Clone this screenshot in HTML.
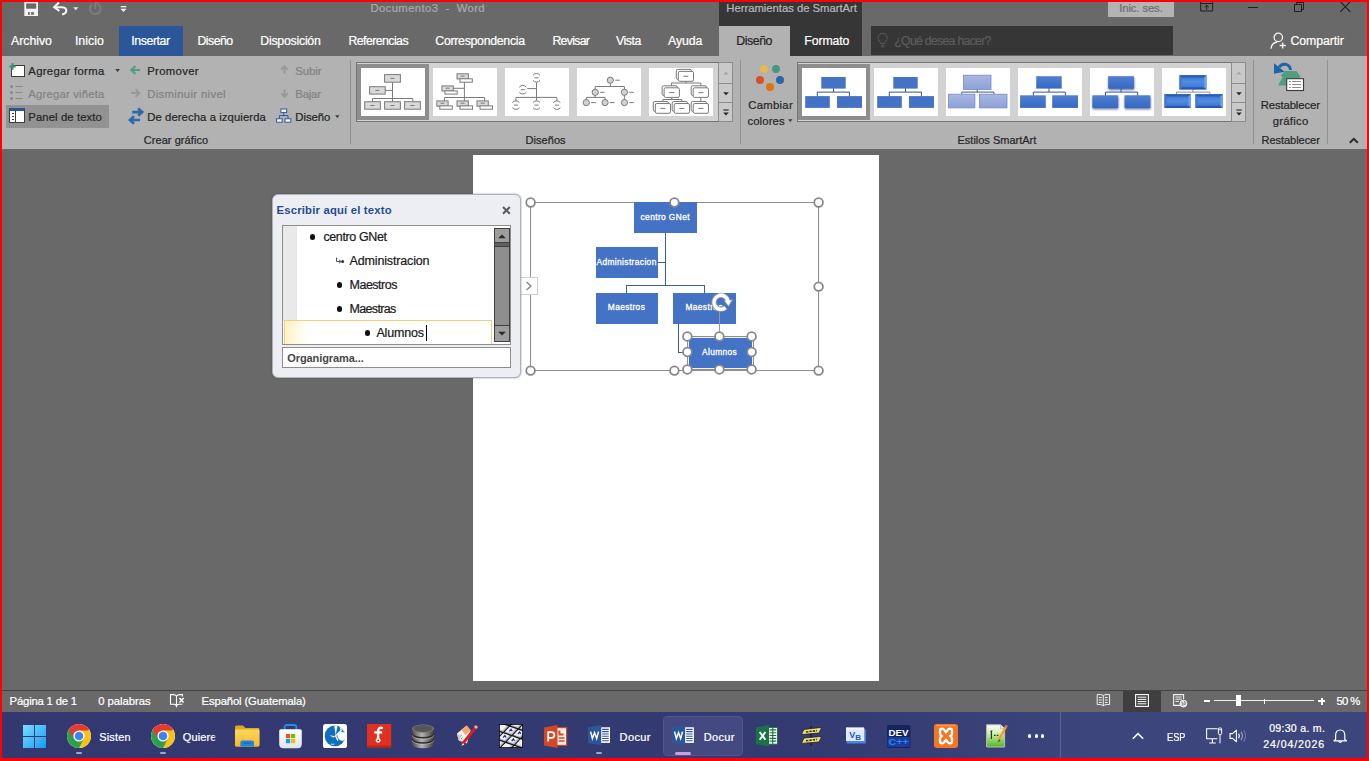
<!DOCTYPE html>
<html><head><meta charset="utf-8">
<style>
*{box-sizing:border-box;margin:0;padding:0}
html,body{width:1369px;height:761px;overflow:hidden;background:#696969}
body{font-family:"Liberation Sans",sans-serif;font-size:12px;color:#fff;position:relative}
.a{position:absolute}
svg{position:absolute;overflow:visible}
.t{position:absolute;white-space:nowrap;line-height:16px;z-index:20;-webkit-text-stroke:0.22px currentColor}
.red{position:absolute;background:#fe0000;z-index:100}
.gal{position:absolute;top:62px;height:60px;background:#d2d2d2;border:1px solid #757575}
.gi{position:absolute;top:68px;width:64px;height:48px;background:#fff}
.gsel{position:absolute;top:64px;width:72px;height:56px;background:#8d8d8d}
.sb{position:absolute;width:15px;background:#c9c9c9;border:1px solid #8c8c8c}
.sep{position:absolute;top:60px;width:1px;height:84px;background:#919191}
.box{position:absolute;background:#4472c4}
.h{position:absolute;width:10.4px;height:10.4px;border-radius:50%;background:#fff;border:1.7px solid #878787;z-index:25}
.ln{position:absolute;background:#3c5f9f}
</style></head><body>
<!-- ================= TITLE BAR ================= -->
<div class="a" style="left:719px;top:0;width:143px;height:56px;background:#363636"></div>
<div class="a" style="left:1108px;top:0;width:66px;height:17px;background:#b3b3b3"></div>
<!-- ================= TABS ================= -->
<div class="a" style="left:119px;top:26px;width:64px;height:30px;background:#2b579a"></div>
<div class="a" style="left:719px;top:26px;width:71px;height:30px;background:#b2b2b2"></div>
<div class="a" style="left:871px;top:26px;width:302px;height:29px;background:#363636"></div>
<!-- save -->
<svg style="left:24px;top:0" width="15" height="17" viewBox="0 0 15 17"><path d="M0.3 0 H14 V16 H0.3 Z" fill="#f2f2f2"/><rect x="2.1" y="3.4" width="10.1" height="5.3" fill="#696969"/><rect x="4" y="12.2" width="6" height="2.5" fill="#696969"/><rect x="5.8" y="12.2" width="1.3" height="2.5" fill="#e8e8e8"/></svg>
<!-- undo -->
<svg style="left:52px;top:0" width="17" height="16" viewBox="0 0 17 16"><path d="M7 2.4 L2.2 7.2 L7.4 11" fill="none" stroke="#f2f2f2" stroke-width="2.1"/><path d="M2.6 7.2 H9.6 C15.4 7.2 16.2 13.2 10 14.4" fill="none" stroke="#f2f2f2" stroke-width="2.1"/></svg>
<svg style="left:73px;top:7px" width="6" height="4" viewBox="0 0 6 4"><path d="M0.2 0.2 H5.4 L2.8 3.2 Z" fill="#e8e8e8"/></svg>
<!-- redo dim -->
<svg style="left:88px;top:0" width="15" height="16" viewBox="0 0 15 16"><path d="M9.8 4.2 A5.3 5.3 0 1 1 4 4.6" fill="none" stroke="#7d7d7d" stroke-width="2"/><path d="M7.2 3 V9.2 M7.2 3.4 L10.8 1.6" fill="none" stroke="#7d7d7d" stroke-width="2"/></svg>
<!-- customize -->
<svg style="left:120px;top:5px" width="7" height="8" viewBox="0 0 7 8"><rect x="0.7" y="1" width="5.6" height="1.3" fill="#f0f0f0"/><path d="M0.5 3.8 H6.5 L3.5 7 Z" fill="#f0f0f0"/></svg>
<!-- window controls (dark) -->
<svg style="left:1200px;top:0" width="14" height="12" viewBox="0 0 14 12"><path d="M0.7 0 V11 H12.7 V0" fill="none" stroke="#1f1f1f" stroke-width="1"/><path d="M0.7 3.5 H12.7" stroke="#1f1f1f" stroke-width="1"/><path d="M6.7 9.8 V5.2 M4.6 7.2 L6.7 5.2 L8.8 7.2" fill="none" stroke="#1f1f1f" stroke-width="1"/></svg>
<div class="a" style="left:1248px;top:7px;width:10px;height:1px;background:#1f1f1f"></div>
<svg style="left:1294px;top:0" width="11" height="12" viewBox="0 0 11 12"><path d="M0.5 4.5 H7.5 V11.5 H0.5 Z" fill="none" stroke="#1f1f1f"/><path d="M2.5 4.5 V2.5 H9.5 V9.5 H7.5" fill="none" stroke="#1f1f1f"/></svg>
<svg style="left:1340px;top:0" width="11" height="13" viewBox="0 0 11 13"><path d="M0.3 1.6 L10.3 11.8 M10.3 1.6 L0.3 11.8" stroke="#1f1f1f" stroke-width="1.1"/></svg>
<!-- bulb -->
<svg style="left:877px;top:33px" width="12" height="16" viewBox="0 0 12 16"><path d="M3.6 10.5 C3.6 8.5 1 7.6 1 4.9 A4.6 4.6 0 0 1 10.2 4.9 C10.2 7.6 7.6 8.5 7.6 10.5 Z" fill="none" stroke="#5a5a5a" stroke-width="1"/><path d="M3.8 12.3 H7.4 M4.3 14 H6.9" stroke="#5a5a5a" stroke-width="1"/></svg>
<!-- share person -->
<svg style="left:1270px;top:32px" width="18" height="18" viewBox="0 0 18 18"><circle cx="8.3" cy="5.4" r="4.2" fill="none" stroke="#f4f4f4" stroke-width="1.3"/><path d="M1 16.8 C1.4 12.6 4 10.4 7.2 10" fill="none" stroke="#f4f4f4" stroke-width="1.3"/><path d="M12.7 10.4 V16.6 M9.6 13.5 H15.8" stroke="#f4f4f4" stroke-width="1.3"/></svg>

<!-- ================= RIBBON ================= -->
<div class="a" style="left:0;top:56px;width:1369px;height:93px;background:#b2b2b2"></div>
<div class="a" style="left:6px;top:105px;width:103px;height:23px;background:#929292"></div>
<div class="sep" style="left:350px"></div>
<div class="sep" style="left:740px"></div>
<div class="sep" style="left:1253px"></div>
<div class="sep" style="left:1327px"></div>
<!-- gallery 1 -->
<div class="gal" style="left:356px;width:363px"></div>
<div class="gsel" style="left:357px"></div>
<div class="gi" style="left:361px"></div><div class="gi" style="left:433px"></div><div class="gi" style="left:505px"></div><div class="gi" style="left:577px"></div><div class="gi" style="left:649px"></div>
<div class="sb" style="left:718px;top:62px;height:22px"></div><div class="sb" style="left:718px;top:83px;height:20px"></div><div class="sb" style="left:718px;top:102px;height:20px"></div>
<!-- gallery 2 -->
<div class="gal" style="left:797px;width:435px"></div>
<div class="gsel" style="left:798px"></div>
<div class="gi" style="left:802px"></div><div class="gi" style="left:874px"></div><div class="gi" style="left:946px"></div><div class="gi" style="left:1018px"></div><div class="gi" style="left:1090px"></div><div class="gi" style="left:1162px"></div>
<div class="sb" style="left:1231px;top:62px;height:22px"></div><div class="sb" style="left:1231px;top:83px;height:20px"></div><div class="sb" style="left:1231px;top:102px;height:20px"></div>
<svg style="left:361px;top:68px" width="64" height="48" viewBox="0 0 64 48"><path d="M31.5 14 V34 M24 22.4 H31.5 M11.5 33.5 V30.5 H51.8 V33.5" fill="none" stroke="#7a7a7a" stroke-width="1"/><rect x="23.6" y="6.6" width="15.8" height="7.6" fill="#d9d9d9" stroke="#7a7a7a" stroke-width="1"/><path d="M29.5 10.4 H33.5" stroke="#7a7a7a" stroke-width="1"/><rect x="8.6" y="18.7" width="15.6" height="7.4" fill="#d9d9d9" stroke="#7a7a7a" stroke-width="1"/><path d="M14.4 22.4 H18.4" stroke="#7a7a7a" stroke-width="1"/><rect x="3.7" y="33.7" width="15.7" height="7.5" fill="#d9d9d9" stroke="#7a7a7a" stroke-width="1"/><path d="M9.5 37.5 H13.5" stroke="#7a7a7a" stroke-width="1"/><rect x="23.6" y="33.7" width="15.8" height="7.5" fill="#d9d9d9" stroke="#7a7a7a" stroke-width="1"/><path d="M29.5 37.5 H33.5" stroke="#7a7a7a" stroke-width="1"/><rect x="43.6" y="33.7" width="15.8" height="7.5" fill="#d9d9d9" stroke="#7a7a7a" stroke-width="1"/><path d="M49.5 37.5 H53.5" stroke="#7a7a7a" stroke-width="1"/></svg>
<svg style="left:433px;top:68px" width="64" height="48" viewBox="0 0 64 48"><path d="M31.4 14 V33 M20 20.3 H31.4 M11.4 32.8 V29.5 H51.6 V32.8" fill="none" stroke="#7a7a7a" stroke-width="1"/><rect x="24.0" y="5.8" width="11.3" height="5.1" fill="#d9d9d9" stroke="#7a7a7a" stroke-width="1"/><path d="M27.6 8.1 H31.6" stroke="#7a7a7a"/><rect x="26.9" y="10.8" width="12.4" height="3.4" fill="#fff" stroke="#7a7a7a" stroke-width="1"/><rect x="8.9" y="17.9" width="11.4" height="5.1" fill="#d9d9d9" stroke="#7a7a7a" stroke-width="1"/><path d="M12.6 20.2 H16.6" stroke="#7a7a7a"/><rect x="11.9" y="22.9" width="12.3" height="3.2" fill="#fff" stroke="#7a7a7a" stroke-width="1"/><rect x="3.8" y="32.9" width="11.3" height="5.3" fill="#d9d9d9" stroke="#7a7a7a" stroke-width="1"/><path d="M7.4 35.2 H11.4" stroke="#7a7a7a"/><rect x="6.8" y="37.9" width="12.5" height="3.3" fill="#fff" stroke="#7a7a7a" stroke-width="1"/><rect x="24.0" y="32.9" width="11.3" height="5.3" fill="#d9d9d9" stroke="#7a7a7a" stroke-width="1"/><path d="M27.6 35.2 H31.6" stroke="#7a7a7a"/><rect x="27.0" y="37.9" width="12.5" height="3.3" fill="#fff" stroke="#7a7a7a" stroke-width="1"/><rect x="44.0" y="32.9" width="11.3" height="5.3" fill="#d9d9d9" stroke="#7a7a7a" stroke-width="1"/><path d="M47.7 35.2 H51.7" stroke="#7a7a7a"/><rect x="47.0" y="37.9" width="12.5" height="3.3" fill="#fff" stroke="#7a7a7a" stroke-width="1"/></svg>
<svg style="left:505px;top:68px" width="64" height="48" viewBox="0 0 64 48"><path d="M31.5 14.3 V32.7 M22.3 20.6 H31.5 M10.9 32.7 V29.4 H51.9 V32.7" fill="none" stroke="#7a7a7a" stroke-width="1"/><path d="M28.0 7.3 A4.3 4.3 0 0 1 35.0 7.3 M28.0 12.3 A4.3 4.3 0 0 0 35.0 12.3" fill="none" stroke="#7a7a7a" stroke-width="1"/><path d="M29.5 9.8 H33.5" stroke="#7a7a7a"/><path d="M14.3 19.2 A4.3 4.3 0 0 1 21.3 19.2 M14.3 24.2 A4.3 4.3 0 0 0 21.3 24.2" fill="none" stroke="#7a7a7a" stroke-width="1"/><path d="M15.8 21.7 H19.8" stroke="#7a7a7a"/><path d="M7.4 34.6 A4.3 4.3 0 0 1 14.4 34.6 M7.4 39.6 A4.3 4.3 0 0 0 14.4 39.6" fill="none" stroke="#7a7a7a" stroke-width="1"/><path d="M8.9 37.1 H12.9" stroke="#7a7a7a"/><path d="M28.0 34.6 A4.3 4.3 0 0 1 35.0 34.6 M28.0 39.6 A4.3 4.3 0 0 0 35.0 39.6" fill="none" stroke="#7a7a7a" stroke-width="1"/><path d="M29.5 37.1 H33.5" stroke="#7a7a7a"/><path d="M48.4 34.6 A4.3 4.3 0 0 1 55.4 34.6 M48.4 39.6 A4.3 4.3 0 0 0 55.4 39.6" fill="none" stroke="#7a7a7a" stroke-width="1"/><path d="M49.9 37.1 H53.9" stroke="#7a7a7a"/></svg>
<svg style="left:577px;top:68px" width="64" height="48" viewBox="0 0 64 48"><path d="M33.3 12.2 V18.5 M18.2 24.3 V18.5 H47.4 V34.6 M18.2 24.3 V29.4 M9.3 34.6 V29.4 H28.1 V34.6" fill="none" stroke="#7a7a7a" stroke-width="1"/><circle cx="33.3" cy="12.2" r="3.1" fill="#d2d2d2" stroke="#7a7a7a"/><path d="M38.3 12.2 H42.7" stroke="#7a7a7a"/><circle cx="18.2" cy="24.3" r="3.1" fill="#d2d2d2" stroke="#7a7a7a"/><path d="M23.2 24.3 H27.6" stroke="#7a7a7a"/><circle cx="47.4" cy="24.3" r="3.1" fill="#d2d2d2" stroke="#7a7a7a"/><path d="M52.4 24.3 H56.8" stroke="#7a7a7a"/><circle cx="9.3" cy="34.6" r="3.1" fill="#d2d2d2" stroke="#7a7a7a"/><path d="M14.3 34.6 H18.7" stroke="#7a7a7a"/><circle cx="28.1" cy="34.6" r="3.1" fill="#d2d2d2" stroke="#7a7a7a"/><path d="M33.1 34.6 H37.5" stroke="#7a7a7a"/><circle cx="47.4" cy="34.6" r="3.1" fill="#d2d2d2" stroke="#7a7a7a"/><path d="M52.4 34.6 H56.8" stroke="#7a7a7a"/></svg>
<svg style="left:649px;top:68px" width="64" height="48" viewBox="0 0 64 48"><path d="M36.9 13 V15 M22.5 19.8 V15 H51.8 V19.8 M22.8 29 V31.5 M13.9 35.5 V31.5 H32.8 V35.5 M51.8 29 V35.5" fill="none" stroke="#7a7a7a" stroke-width="1"/><rect x="27.3" y="1.4" width="15.2" height="9.9" rx="1.5" fill="#fff" stroke="#7a7a7a"/><rect x="29.3" y="3.4" width="15.2" height="9.9" rx="1.5" fill="#fff" stroke="#7a7a7a"/><path d="M34.4 8.3 H39.4" stroke="#7a7a7a"/><rect x="13.1" y="17.8" width="15.3" height="9.6" rx="1.5" fill="#fff" stroke="#7a7a7a"/><rect x="15.1" y="19.8" width="15.3" height="9.6" rx="1.5" fill="#fff" stroke="#7a7a7a"/><path d="M20.2 24.6 H25.2" stroke="#7a7a7a"/><rect x="42.2" y="17.8" width="15.3" height="9.6" rx="1.5" fill="#fff" stroke="#7a7a7a"/><rect x="44.2" y="19.8" width="15.3" height="9.6" rx="1.5" fill="#fff" stroke="#7a7a7a"/><path d="M49.4 24.6 H54.4" stroke="#7a7a7a"/><rect x="4.3" y="33.5" width="15.2" height="9.8" rx="1.5" fill="#fff" stroke="#7a7a7a"/><rect x="6.3" y="35.5" width="15.2" height="9.8" rx="1.5" fill="#fff" stroke="#7a7a7a"/><path d="M11.4 40.4 H16.4" stroke="#7a7a7a"/><rect x="23.2" y="33.5" width="15.3" height="9.8" rx="1.5" fill="#fff" stroke="#7a7a7a"/><rect x="25.2" y="35.5" width="15.3" height="9.8" rx="1.5" fill="#fff" stroke="#7a7a7a"/><path d="M30.4 40.4 H35.4" stroke="#7a7a7a"/><rect x="42.2" y="33.5" width="15.3" height="9.8" rx="1.5" fill="#fff" stroke="#7a7a7a"/><rect x="44.2" y="35.5" width="15.3" height="9.8" rx="1.5" fill="#fff" stroke="#7a7a7a"/><path d="M49.4 40.4 H54.4" stroke="#7a7a7a"/></svg>
<svg width="0" height="0" style="left:0;top:0"><defs>
<linearGradient id="g3" x1="0" y1="0" x2="0" y2="1"><stop offset="0" stop-color="#a9b7e2"/><stop offset="1" stop-color="#8da1d8"/></linearGradient>
<linearGradient id="g4" x1="0" y1="0" x2="0" y2="1"><stop offset="0" stop-color="#5080d0"/><stop offset="1" stop-color="#3468c4"/></linearGradient>
<linearGradient id="g6" x1="0" y1="0" x2="0" y2="1"><stop offset="0" stop-color="#3a6fca"/><stop offset="0.45" stop-color="#4f8de2"/><stop offset="1" stop-color="#3a72d0"/></linearGradient>
<filter id="sh" x="-20%" y="-20%" width="140%" height="160%"><feGaussianBlur stdDeviation="0.8"/></filter>
</defs></svg>
<svg style="left:802px;top:68px" width="64" height="48" viewBox="0 0 64 48"><path d="M31.5 20.1 V24.1 M15.3 28.6 V24.1 H47.4 V28.6" fill="none" stroke="#34558f" stroke-width="1"/><rect x="19.3" y="9" width="24.4" height="11.6" fill="#4472c4"/><rect x="3.2" y="28.1" width="24.6" height="11.8" fill="#4472c4"/><rect x="35" y="28.1" width="25.0" height="11.8" fill="#4472c4"/></svg>
<svg style="left:874px;top:68px" width="64" height="48" viewBox="0 0 64 48"><path d="M31.5 20.1 V24.1 M15.3 28.6 V24.1 H47.4 V28.6" fill="none" stroke="#34558f" stroke-width="1"/><rect x="19.3" y="9" width="24.4" height="11.6" fill="#4472c4"/><rect x="3.2" y="28.1" width="24.6" height="11.8" fill="#4472c4"/><rect x="35" y="28.1" width="25.0" height="11.8" fill="#4472c4"/></svg>
<svg style="left:946px;top:68px" width="64" height="48" viewBox="0 0 64 48"><path d="M31.2 20.9 V24.1 M15.8 26.7 V24.1 H47.9 V26.7" fill="none" stroke="#3b5897" stroke-width="1"/><rect x="17.4" y="7.2" width="27.6" height="14.2" fill="url(#g3)" stroke="#7689c2" stroke-width="0.8"/><rect x="2.4" y="26.2" width="26.5" height="13.7" fill="url(#g3)" stroke="#7689c2" stroke-width="0.8"/><rect x="33.4" y="26.2" width="27.6" height="13.7" fill="url(#g3)" stroke="#7689c2" stroke-width="0.8"/></svg>
<svg style="left:1018px;top:68px" width="64" height="48" viewBox="0 0 64 48"><path d="M31.0 20.1 V24.1 M15.3 27.8 V24.1 H47.4 V27.8" fill="none" stroke="#34558f" stroke-width="1"/><rect x="18.2" y="8.2" width="25.5" height="12.4" fill="url(#g4)"/><rect x="2.1" y="27.3" width="25.7" height="12.6" fill="url(#g4)"/><rect x="34.2" y="27.3" width="25.8" height="12.6" fill="url(#g4)"/></svg>
<svg style="left:1090px;top:68px" width="64" height="48" viewBox="0 0 64 48"><rect x="18.5" y="9.6" width="25.7" height="12.4" fill="#25407a" opacity="0.75" filter="url(#sh)"/><rect x="2.6999999999999997" y="28.7" width="25.7" height="12.6" fill="#25407a" opacity="0.75" filter="url(#sh)"/><rect x="34.9" y="28.7" width="25.7" height="12.6" fill="#25407a" opacity="0.75" filter="url(#sh)"/><path d="M31.0 20.1 V24.1 M15.5 27.8 V24.1 H47.6 V27.8" fill="none" stroke="#34558f" stroke-width="1"/><rect x="18.2" y="8.2" width="25.7" height="12.4" fill="url(#g4)"/><rect x="2.4" y="27.3" width="25.7" height="12.6" fill="url(#g4)"/><rect x="34.6" y="27.3" width="25.7" height="12.6" fill="url(#g4)"/></svg>
<svg style="left:1162px;top:68px" width="64" height="48" viewBox="0 0 64 48"><path d="M30.9 20.9 V24.1 M14.5 26.7 V24.1 H47.9 V26.7" fill="none" stroke="#8a8f9a" stroke-width="1"/><rect x="17.4" y="7.2" width="27.1" height="14.2" fill="url(#g6)"/><path d="M17.4 7.2 H44.5 L42.1 9.4 H19.799999999999997 Z" fill="#2d5cb4"/><path d="M17.4 21.4 H44.5 L42.1 19.2 H19.799999999999997 Z" fill="#2a58b0"/><path d="M17.4 7.2 L19.799999999999997 9.4 V19.2 L17.4 21.4 Z" fill="#3e79d6"/><path d="M44.5 7.2 L42.1 9.4 V19.2 L44.5 21.4 Z" fill="#6aa2ee"/><rect x="2.4" y="26.2" width="26.5" height="13.7" fill="url(#g6)"/><path d="M2.4 26.2 H28.9 L26.5 28.4 H4.8 Z" fill="#2d5cb4"/><path d="M2.4 39.9 H28.9 L26.5 37.699999999999996 H4.8 Z" fill="#2a58b0"/><path d="M2.4 26.2 L4.8 28.4 V37.699999999999996 L2.4 39.9 Z" fill="#3e79d6"/><path d="M28.9 26.2 L26.5 28.4 V37.699999999999996 L28.9 39.9 Z" fill="#6aa2ee"/><rect x="33.4" y="26.2" width="27.4" height="13.7" fill="url(#g6)"/><path d="M33.4 26.2 H60.8 L58.4 28.4 H35.8 Z" fill="#2d5cb4"/><path d="M33.4 39.9 H60.8 L58.4 37.699999999999996 H35.8 Z" fill="#2a58b0"/><path d="M33.4 26.2 L35.8 28.4 V37.699999999999996 L33.4 39.9 Z" fill="#3e79d6"/><path d="M60.8 26.2 L58.4 28.4 V37.699999999999996 L60.8 39.9 Z" fill="#6aa2ee"/></svg>
<!-- agregar forma -->
<div class="a" style="left:11px;top:65px;width:14px;height:12px;background:#fff;border:1px solid #3d3d3d"></div>
<svg style="left:8.5px;top:62.5px" width="7" height="7" viewBox="0 0 7 7"><path d="M3.5 0.3 V6.7 M0.3 3.5 H6.7" stroke="#3f9473" stroke-width="2.2"/></svg>
<svg style="left:115px;top:69px" width="6" height="4" viewBox="0 0 6 4"><path d="M0.2 0.1 H5 L2.6 3.1 Z" fill="#3a3a3a"/></svg>
<!-- agregar viñeta (dim) -->
<svg style="left:9px;top:84px" width="15" height="17" viewBox="0 0 15 17"><g fill="#878787"><circle cx="2.5" cy="2.5" r="1.5"/><circle cx="2.5" cy="8.5" r="1.5"/><circle cx="2.5" cy="14.5" r="1.5"/></g><path d="M6.4 2.5 H13.8 M6.4 8.5 H13.8 M6.4 14.5 H13.8" stroke="#8a8a8a" stroke-width="1"/></svg>
<!-- panel de texto -->
<div class="a" style="left:9px;top:108px;width:16px;height:15px;background:#fff;border:1px solid #3d3d3d;border-top:3px solid #2b579a"></div>
<div class="a" style="left:15px;top:111px;width:1px;height:11px;background:#3d3d3d"></div>
<div class="a" style="left:11.5px;top:113px;width:2.5px;height:1px;background:#3d3d3d"></div><div class="a" style="left:11.5px;top:116px;width:2.5px;height:1px;background:#3d3d3d"></div><div class="a" style="left:11.5px;top:119px;width:2.5px;height:1px;background:#3d3d3d"></div>
<!-- promover -->
<svg style="left:130px;top:65px" width="11" height="10" viewBox="0 0 11 10"><path d="M5.4 1 L1.4 5 L5.4 9 M1.6 5 H10.2" fill="none" stroke="#4f9e7e" stroke-width="2.1"/></svg>
<!-- disminuir (dim) -->
<svg style="left:130px;top:88px" width="11" height="10" viewBox="0 0 11 10"><path d="M5.6 1.2 L9.4 5 L5.6 8.8 M9.2 5 H1" fill="none" stroke="#989898" stroke-width="1.8"/></svg>
<!-- de derecha a izquierda -->
<svg style="left:128px;top:107px" width="17" height="18" viewBox="0 0 17 18"><path d="M4.2 5.1 H13.6 M10.2 1.4 L14.2 5.1 L10.2 8.8" fill="none" stroke="#2e68ad" stroke-width="2.7"/><path d="M12 13 H2.6 M6 9.3 L2 13 L6 16.7" fill="none" stroke="#2e68ad" stroke-width="2.7"/></svg>
<!-- subir / bajar dim -->
<svg style="left:279.5px;top:65.2px" width="9" height="9" viewBox="0 0 9 9"><path d="M4.5 8.6 V1.6 M1.2 4.7 L4.5 1.4 L7.8 4.7" fill="none" stroke="#989898" stroke-width="1.9"/></svg>
<svg style="left:279.5px;top:88.8px" width="9" height="9" viewBox="0 0 9 9"><path d="M4.5 0.4 V7.4 M1.2 4.3 L4.5 7.6 L7.8 4.3" fill="none" stroke="#989898" stroke-width="1.9"/></svg>
<!-- diseño icon -->
<svg style="left:276px;top:108px" width="16" height="15" viewBox="0 0 16 15"><path d="M7.7 4.5 V7.6 M3.4 10.5 V7.6 H12 V10.5" fill="none" stroke="#2b579a" stroke-width="1"/><rect x="4.9" y="1" width="5.8" height="3.4" fill="#fff" stroke="#2b579a"/><rect x="0.6" y="10.8" width="5.6" height="3.4" fill="#fff" stroke="#2b579a"/><rect x="9" y="10.8" width="5.8" height="3.4" fill="#fff" stroke="#2b579a"/></svg>
<svg style="left:334.5px;top:115px" width="5" height="4" viewBox="0 0 5 4"><path d="M0.1 0.2 H4.5 L2.3 3 Z" fill="#3a3a3a"/></svg>
<!-- cambiar colores -->
<div class="a" style="left:760px;top:64.7px;width:8px;height:8px;border-radius:50%;background:#e8b84e"></div>
<div class="a" style="left:772px;top:64.7px;width:8px;height:8px;border-radius:50%;background:#48987a"></div>
<div class="a" style="left:756px;top:76px;width:8px;height:8px;border-radius:50%;background:#d94f2a"></div>
<div class="a" style="left:776px;top:76px;width:8px;height:8px;border-radius:50%;background:#2a66a8"></div>
<div class="a" style="left:766px;top:83px;width:8px;height:8px;border-radius:50%;background:#e2740f"></div>
<svg style="left:788px;top:119px" width="5" height="4" viewBox="0 0 5 4"><path d="M0.1 0.2 H4.5 L2.3 3 Z" fill="#3a3a3a"/></svg>
<!-- restablecer -->
<svg style="left:1272px;top:61px" width="34" height="32" viewBox="0 0 34 32"><path d="M13.1 10.1 H24.4 L28.6 15.8 L20 24.6 H5.9 L10.6 16.3 L8.7 14.4 Z" fill="#4f9e7e"/><path d="M18.5 9 A6 6 0 0 0 7.2 6.4" fill="none" stroke="#1f63a8" stroke-width="3"/><path d="M2 2.2 L2 12.8 L12.6 10.8 Z" fill="#1f63a8"/><rect x="14.7" y="17.7" width="16.8" height="11.8" fill="#fff" stroke="#3a3a3a" stroke-width="1.1"/><path d="M17 20.5 H18.8 M20.2 20.5 H29 M17 23.5 H18.8 M20.2 23.5 H29 M17 26.5 H18.8 M20.2 26.5 H29" stroke="#8a8a8a" stroke-width="1"/></svg>
<!-- collapse -->
<svg style="left:1349px;top:137px" width="10" height="7" viewBox="0 0 10 7"><path d="M0.8 5.8 L4.8 1.8 L8.8 5.8" fill="none" stroke="#2a2a2a" stroke-width="2"/></svg>
<!-- gallery scroll arrows -->
<svg style="left:722.6px;top:71px" width="6" height="4" viewBox="0 0 6 4"><path d="M0.3 3.4 L3 0.4 L5.7 3.4 Z" fill="#a6a6a6"/></svg>
<svg style="left:722.6px;top:92px" width="6" height="4" viewBox="0 0 6 4"><path d="M0.2 0.2 H5.8 L3 3.2 Z" fill="#262626"/></svg>
<svg style="left:722.6px;top:108.6px" width="6" height="8" viewBox="0 0 6 8"><path d="M0.3 1 H5.7" stroke="#262626" stroke-width="1.1"/><path d="M0.2 3.4 H5.8 L3 6.4 Z" fill="#262626"/></svg>
<svg style="left:1235.8px;top:71px" width="6" height="4" viewBox="0 0 6 4"><path d="M0.3 3.4 L3 0.4 L5.7 3.4 Z" fill="#a6a6a6"/></svg>
<svg style="left:1235.8px;top:92px" width="6" height="4" viewBox="0 0 6 4"><path d="M0.2 0.2 H5.8 L3 3.2 Z" fill="#262626"/></svg>
<svg style="left:1235.8px;top:108.6px" width="6" height="8" viewBox="0 0 6 8"><path d="M0.3 1 H5.7" stroke="#262626" stroke-width="1.1"/><path d="M0.2 3.4 H5.8 L3 6.4 Z" fill="#262626"/></svg>

<!-- ================= DOCUMENT ================= -->
<div class="a" style="left:473px;top:155px;width:406px;height:526px;background:#fff"></div>
<!-- ================= SMARTART ================= -->
<div class="a" style="left:530px;top:202px;width:289px;height:169px;border:1px solid #8d8d8d"></div>
<!-- connectors -->
<div class="ln" style="left:665px;top:232px;width:1px;height:54px"></div>
<div class="ln" style="left:658px;top:262px;width:7px;height:1px"></div>
<div class="ln" style="left:626px;top:285px;width:79px;height:1px"></div>
<div class="ln" style="left:626px;top:285px;width:1px;height:8px"></div>
<div class="ln" style="left:704px;top:285px;width:1px;height:8px"></div>
<div class="ln" style="left:678px;top:323px;width:1px;height:30px"></div>
<div class="ln" style="left:678px;top:352px;width:10px;height:1px"></div>
<!-- boxes -->
<div class="box" style="left:634px;top:202px;width:63px;height:31px"></div>
<div class="box" style="left:596px;top:247px;width:62px;height:31px"></div>
<div class="box" style="left:596px;top:293px;width:62px;height:31px"></div>
<div class="box" style="left:673px;top:293px;width:63px;height:31px"></div>
<div class="box" style="left:689px;top:337.6px;width:62.5px;height:30.6px;box-shadow:0 0 0 1px #eef1f7,0 0 0 2px #8f8f8f;z-index:21"></div>
<!-- rotate handle -->
<div class="a" style="left:719px;top:310px;width:1px;height:22px;background:#9a9a9a;z-index:22"></div>
<svg style="left:709.6px;top:290.5px;z-index:26" width="24" height="22" viewBox="0 0 24 22"><path d="M15.6 16.6 A7 7 0 1 1 17.9 10.2" fill="none" stroke="#a4a4a4" stroke-width="5"/><path d="M13.6 9.2 L23 8.4 L18.6 15.8 Z" fill="#a4a4a4"/><path d="M15.6 16.6 A7 7 0 1 1 17.9 10.2" fill="none" stroke="#fff" stroke-width="3.4"/><path d="M14.8 9.9 L21.6 9.2 L18.4 14.4 Z" fill="#fff"/></svg>
<!-- outer handles -->
<svg style="left:0;top:0;z-index:25" width="900" height="400" viewBox="0 0 900 400"><g fill="#fff" stroke="#878787" stroke-width="1.75"><circle cx="530.6" cy="202.5" r="4.35"/><circle cx="674.4" cy="202.5" r="4.35"/><circle cx="818.6" cy="202.5" r="4.35"/><circle cx="818.6" cy="286.6" r="4.35"/><circle cx="530.6" cy="370.6" r="4.35"/><circle cx="674.4" cy="370.6" r="4.35"/><circle cx="818.6" cy="370.6" r="4.35"/><circle cx="687.4" cy="336.4" r="4.35"/><circle cx="719.4" cy="336.4" r="4.35"/><circle cx="751.6" cy="336.4" r="4.35"/><circle cx="687.4" cy="352" r="4.35"/><circle cx="751.6" cy="352" r="4.35"/><circle cx="687.4" cy="369.4" r="4.35"/><circle cx="719.4" cy="369.4" r="4.35"/><circle cx="751.6" cy="369.4" r="4.35"/></g></svg>
<!-- expand tab -->
<div class="a" style="left:520px;top:277px;width:18px;height:18px;background:#fff;border:1px solid #cfcfcf;z-index:9"></div>
<svg style="left:525px;top:281px;z-index:12" width="8" height="10" viewBox="0 0 8 10"><path d="M1.5 1 L6 5 L1.5 9" stroke="#8a8a8a" stroke-width="1.5" fill="none"/></svg>

<!-- ================= TEXT PANE ================= -->
<div class="a" style="left:272px;top:194px;width:249px;height:184px;background:#ededf4;border:1px solid #aeb2bc;border-radius:6px;box-shadow:0 0 2px rgba(50,50,60,.55);z-index:10"></div>
<svg style="left:502px;top:205.8px;z-index:11" width="9" height="9" viewBox="0 0 9 9"><path d="M1 1 L7.8 7.8 M7.8 1 L1 7.8" stroke="#5c5c5c" stroke-width="2" fill="none"/></svg>
<div class="a" style="left:282px;top:225px;width:229px;height:120px;background:#fff;border:1px solid #8e8e8e;z-index:11;overflow:hidden">
  <div class="a" style="left:0;top:0;width:14px;height:95px;background:#e9e9e9"></div>
  <div class="a" style="left:1px;top:94px;width:208px;height:31px;background:#fff;border:1px solid #f2cf7e"></div>
  <div class="a" style="left:2px;top:95px;width:24px;height:29px;background:linear-gradient(90deg,#fff2c4,#fff8de 45%,#fff)"></div>
  <!-- scrollbar -->
  <div class="a" style="left:211px;top:2px;width:16px;height:114px;background:#8e8e8e;border:1px solid #3f3f3f"></div>
  <div class="a" style="left:212px;top:3px;width:14px;height:14px;background:#9d9d9d;border-bottom:1px solid #3f3f3f"></div>
  <div class="a" style="left:212px;top:17px;width:14px;height:4px;background:#5f5f5f;border-bottom:1px solid #3f3f3f"></div>
  <div class="a" style="left:212px;top:99px;width:14px;height:16px;background:#9d9d9d;border-top:1px solid #3f3f3f"></div>
  <svg style="left:214px;top:7px" width="10" height="6" viewBox="0 0 10 6"><path d="M1.2 5.2 L5 1.4 L8.8 5.2 Z" fill="#2a2a2a"/></svg>
  <svg style="left:214px;top:105px" width="10" height="6" viewBox="0 0 10 6"><path d="M1.2 0.8 L5 4.6 L8.8 0.8 Z" fill="#2a2a2a"/></svg>
  <!-- bullets -->
  <div class="a" style="left:26.8px;top:8.4px;width:5.4px;height:5.4px;border-radius:50%;background:#111"></div>
  <div class="a" style="left:54px;top:56.4px;width:5.4px;height:5.4px;border-radius:50%;background:#111"></div>
  <div class="a" style="left:54px;top:80.4px;width:5.4px;height:5.4px;border-radius:50%;background:#111"></div>
  <div class="a" style="left:81.8px;top:104.4px;width:5.4px;height:5.4px;border-radius:50%;background:#111"></div>
  <svg style="left:52px;top:31px" width="10" height="8" viewBox="0 0 10 8"><path d="M1.5 0.5 V4.5 H6" stroke="#555" stroke-width="1" fill="none"/><path d="M4 2.8 L6 4.5 L4 6.2" stroke="#555" stroke-width="1" fill="none"/><circle cx="7.6" cy="4.5" r="1.5" fill="#333"/></svg>
  <!-- caret -->
  <div class="a" style="left:142.6px;top:99px;width:1px;height:16px;background:#000"></div>
</div>
<div class="a" style="left:282px;top:347px;width:229px;height:21px;background:#fff;border:1px solid #8e8e8e;z-index:11"></div>

<!-- ================= STATUS BAR ================= -->
<div class="a" style="left:0;top:690px;width:1369px;height:1px;background:#434343"></div>
<div class="a" style="left:1123px;top:691px;width:38px;height:21px;background:#3f3f3f"></div>
<!-- proofing book -->
<svg style="left:169px;top:693px" width="16" height="15" viewBox="0 0 16 15"><path d="M7.5 3 C6.6 1.9 5.4 1.6 4.4 1.6 H1.5 V11.3 H5.2 C6.3 11.3 7 12 7.5 13.4 C8 12 8.7 11.3 9.8 11.3 H13.4 M7.5 3 C8.4 1.9 9.6 1.6 10.6 1.6 H13.4 V3.4 M7.5 3 V13" fill="none" stroke="#fff" stroke-width="1.1"/><path d="M10.4 5 L14.6 9.6 M14.6 5 L10.4 9.6" stroke="#fff" stroke-width="1.5"/></svg>
<!-- read mode -->
<svg style="left:1096px;top:693px" width="15" height="15" viewBox="0 0 15 15"><path d="M7.3 2.6 C6 1.5 3.5 1.4 1.2 1.6 V11.6 C3.5 11.4 6 11.5 7.3 12.8 C8.6 11.5 11.1 11.4 13.6 11.6 V1.6 C11.1 1.4 8.6 1.5 7.3 2.6 Z M7.3 2.6 V12.6" fill="none" stroke="#f2f2f2" stroke-width="1"/><path d="M2.9 4.5 H5.7 M2.9 7 H5.7 M2.9 9.5 H5.7 M8.9 4.5 H11.7 M8.9 7 H11.7 M8.9 9.5 H11.7" stroke="#f2f2f2" stroke-width="1"/></svg>
<!-- print layout -->
<svg style="left:1135px;top:694px" width="14" height="13" viewBox="0 0 14 13"><rect x="0.6" y="0.6" width="12.8" height="11.8" fill="none" stroke="#fff" stroke-width="1.1"/><path d="M2.6 3.2 H11.4 M2.6 5.4 H11.4 M2.6 7.6 H11.4 M2.6 9.8 H11.4" stroke="#fff" stroke-width="1"/></svg>
<!-- web layout -->
<svg style="left:1173px;top:694px" width="15" height="14" viewBox="0 0 15 14"><path d="M7 11.4 H0.6 V0.6 H10.6 V5.2" fill="none" stroke="#f2f2f2" stroke-width="1.1"/><path d="M2.4 3 H8.8 M2.4 5.2 H8.8 M2.4 7.4 H6" stroke="#f2f2f2" stroke-width="1"/><circle cx="10.4" cy="9.6" r="3.4" fill="#dcdcdc" stroke="#f4f4f4" stroke-width="1"/><path d="M8.4 8.2 L10.2 9.6 L9.4 11.6 M11.2 7 L12.4 9 L11.6 11" fill="none" stroke="#696969" stroke-width="0.9"/></svg>
<!-- zoom slider -->
<div class="a" style="left:1204px;top:700px;width:6px;height:2px;background:#fff"></div>
<div class="a" style="left:1214px;top:700.4px;width:100px;height:1px;background:#f0f0f0"></div>
<div class="a" style="left:1236px;top:695px;width:5px;height:11px;background:#fff"></div>
<div class="a" style="left:1264px;top:699px;width:1px;height:5px;background:#f0f0f0"></div>
<div class="a" style="left:1318px;top:700px;width:7px;height:2px;background:#fff"></div>
<div class="a" style="left:1320.5px;top:697.5px;width:2px;height:7px;background:#fff"></div>

<!-- ================= TASKBAR ================= -->
<div class="a" style="left:0;top:712px;width:1369px;height:49px;background:linear-gradient(90deg,#333970 0,#343a72 60%,#3c457c 80%,#3c457c 100%)"></div>
<svg width="0" height="0" style="left:0;top:0"><defs>
<linearGradient id="wl" x1="0" y1="0" x2="1" y2="1"><stop offset="0" stop-color="#7adcff"/><stop offset="1" stop-color="#149cf2"/></linearGradient>
<linearGradient id="cyl" x1="0" y1="0" x2="1" y2="0"><stop offset="0" stop-color="#4a4a4a"/><stop offset="0.45" stop-color="#b4b4b4"/><stop offset="1" stop-color="#3c3c3c"/></linearGradient>
<linearGradient id="npg" x1="0" y1="0" x2="0" y2="1"><stop offset="0" stop-color="#ffffff"/><stop offset="0.35" stop-color="#d8f0b8"/><stop offset="1" stop-color="#4db81a"/></linearGradient>
<linearGradient id="fold" x1="0" y1="0" x2="0" y2="1"><stop offset="0" stop-color="#ffd75e"/><stop offset="1" stop-color="#f3b82a"/></linearGradient>
<linearGradient id="bag" x1="0" y1="0" x2="0" y2="1"><stop offset="0" stop-color="#ffffff"/><stop offset="1" stop-color="#dfe3ee"/></linearGradient>
<g id="chrome"><circle cx="12" cy="12" r="12" fill="#fff"/>
<path d="M12 12 L1.61 6 A12 12 0 0 1 22.39 6 Z" fill="#e33b2e"/>
<path d="M12 12 L22.39 6 A12 12 0 0 1 12 24 Z" fill="#fbc116"/>
<path d="M12 12 L12 24 A12 12 0 0 1 1.61 6 Z" fill="#2da04a"/>
<path d="M12 6.5 H22.2 L17 15 Z" fill="#fbc116"/><path d="M7.2 14.8 L1.61 6 L12 6.5 Z" fill="#e33b2e"/><path d="M16.8 14.8 L12 24 L7.2 14.8 Z" fill="#2da04a"/>
<circle cx="12" cy="12" r="5.6" fill="#fff"/><circle cx="12" cy="12" r="4.3" fill="#3f83ec"/></g>
<g id="wordi"><path d="M0 2.6 L13.5 0 V23 L0 20.4 Z" fill="#2b579a"/><rect x="13.5" y="2.6" width="9" height="17.8" fill="#fff"/><path d="M14.5 5 H21.2 M14.5 7.6 H21.2 M14.5 10.2 H21.2 M14.5 12.8 H21.2 M14.5 15.4 H21.2 M14.5 18 H21.2" stroke="#2b579a" stroke-width="1.3"/><path d="M2.6 7.6 L4.5 15.4 L6.7 8.6 L8.9 15.4 L10.8 7.6" fill="none" stroke="#fff" stroke-width="1.5"/></g>
</defs></svg>
<!-- windows logo -->
<svg style="left:23px;top:725px" width="23" height="23" viewBox="0 0 23 23"><path d="M0 0 H11 V11 H0 Z M12 0 H23 V11 H12 Z M0 12 H11 V23 H0 Z M12 12 H23 V23 H12 Z" fill="url(#wl)"/></svg>
<!-- chrome x2 -->
<svg style="left:67px;top:724px" width="24" height="24" viewBox="0 0 24 24"><use href="#chrome"/></svg>
<svg style="left:151px;top:724px" width="24" height="24" viewBox="0 0 24 24"><use href="#chrome"/></svg>
<div class="a" style="left:76px;top:752px;width:6px;height:2.4px;border-radius:1.2px;background:#a3a6c4"></div>
<div class="a" style="left:160px;top:752px;width:6px;height:2.4px;border-radius:1.2px;background:#a3a6c4"></div>
<div class="a" style="left:596px;top:752px;width:6px;height:2.4px;border-radius:1.2px;background:#a3a6c4"></div>
<!-- text fades -->
<div class="a" style="left:129.5px;top:728px;width:6px;height:18px;background:linear-gradient(90deg,rgba(52,57,113,0),#343971 2px);z-index:22"></div>
<div class="a" style="left:213.5px;top:728px;width:6px;height:18px;background:linear-gradient(90deg,rgba(52,57,113,0),#343971 2px);z-index:22"></div>
<!-- folder -->
<svg style="left:235px;top:725px" width="25" height="22" viewBox="0 0 25 22"><path d="M0 2 Q0 0.4 1.6 0.4 H8 L10.4 3 H23 Q24.4 3 24.4 4.4 V20 Q24.4 21.6 22.8 21.6 H1.6 Q0 21.6 0 20 Z" fill="#e2a725"/><path d="M0 6 Q0 4.6 1.4 4.6 H23 Q24.4 4.6 24.4 6 V20 Q24.4 21.6 22.8 21.6 H1.6 Q0 21.6 0 20 Z" fill="url(#fold)"/><path d="M5.4 21.6 V17.4 Q5.4 15.4 7.4 15.4 H17 Q19 15.4 19 17.4 V21.6 Z" fill="#1f86de"/><rect x="8.6" y="17.6" width="7" height="1.2" fill="#1668b8"/></svg>
<!-- store -->
<svg style="left:279px;top:724px" width="23" height="25" viewBox="0 0 23 25"><path d="M5.6 6 V3.4 Q5.6 1 8 1 H15 Q17.4 1 17.4 3.4 V6" fill="none" stroke="#1d8fe4" stroke-width="1.8"/><path d="M0.2 7 Q0.2 5.2 2 5.2 H21 Q22.8 5.2 22.8 7 V20 Q22.8 24.2 18.6 24.2 H4.4 Q0.2 24.2 0.2 20 Z" fill="url(#bag)"/><rect x="7" y="10" width="4.2" height="4.2" fill="#f25022"/><rect x="12" y="10" width="4.2" height="4.2" fill="#7fba00"/><rect x="7" y="15" width="4.2" height="4.2" fill="#00a4ef"/><rect x="12" y="15" width="4.2" height="4.2" fill="#ffb900"/></svg>
<!-- blue circle icon -->
<svg style="left:323px;top:724px" width="24" height="24" viewBox="0 0 24 24"><defs><clipPath id="kc"><circle cx="12" cy="11.9" r="10.3"/></clipPath></defs><rect x="0" y="0" width="24" height="24" rx="2.6" fill="#fff"/><circle cx="12" cy="11.9" r="10.3" fill="#0f6fbe"/><g clip-path="url(#kc)"><path d="M11 0 L14.8 0 L12.7 11.6 Z" fill="#fff"/><circle cx="19.6" cy="11.6" r="5.2" fill="#fff"/><path d="M16 0.8 L24 0.8 L24 9 L18 7.4 Z" fill="#fff"/><path d="M18.4 4.4 L21.6 8.4 L17.6 7.4 Z" fill="#0f6fbe"/></g><path d="M19 5.6 L12.6 11.8 L15 16.6" fill="none" stroke="#fff" stroke-width="1.3"/><path d="M6.4 11.2 L12.4 12.2 L10.4 13.6 Z" fill="#fff"/><path d="M8 20 Q10 20.8 11.4 20" stroke="#cfe6f8" stroke-width="1" fill="none"/></svg>
<!-- flash -->
<svg style="left:367px;top:724px" width="25" height="24" viewBox="0 0 25 24"><rect x="0" y="0" width="24.2" height="24" fill="#b3271b"/><rect x="0" y="0" width="24.2" height="21.5" fill="#df3020"/><path d="M15.8 4.2 Q11.1 2.6 11.1 7.4 V14.2 M7.3 8.4 H15.2" fill="none" stroke="#fff" stroke-width="2.4"/><circle cx="11.1" cy="16.3" r="2.4" fill="#fff"/><circle cx="11.2" cy="16.4" r="0.8" fill="#5a1a14"/></svg>
<!-- db cylinder -->
<svg style="left:411px;top:724px" width="24" height="25" viewBox="0 0 24 25"><path d="M1 4.6 V20 A11 4.2 0 0 0 23 20 V4.6 Z" fill="url(#cyl)"/><path d="M1 9.6 A11 4.2 0 0 0 23 9.6 M1 14.8 A11 4.2 0 0 0 23 14.8" fill="none" stroke="#2c2c2c" stroke-width="1.5"/><path d="M1 11 A11 4.2 0 0 0 23 11 M1 16.2 A11 4.2 0 0 0 23 16.2" fill="none" stroke="#c8c8c8" stroke-width="0.7" opacity="0.7"/><ellipse cx="12" cy="4.6" rx="11" ry="4.2" fill="#7e7e7e"/><ellipse cx="12" cy="4.5" rx="9.8" ry="3.4" fill="#565656"/></svg>
<!-- pencil/sheet -->
<svg style="left:456px;top:725px" width="22" height="22" viewBox="0 0 22 22"><path d="M1 8.6 L10.6 0.4 L14.6 5.2 L11 18.4 L2.8 15.6 Z" fill="#f3f1ee"/><path d="M5.6 4.8 L10.6 0.4 L14.6 5.2 L9.4 10 Z" fill="#f4a66c"/><path d="M1 8.6 L2.8 15.6 L5 16.4 L3.4 9.4 Z" fill="#cfcfcf"/><path d="M4.2 11.4 L5.6 10.2 M5 13.8 L6.4 12.6" stroke="#3a7a5a" stroke-width="0.9"/><path d="M20.2 1.8 L6.2 19.4" stroke="#d81e1e" stroke-width="3"/><path d="M20.8 1 L19.2 3" stroke="#f0b0a0" stroke-width="3"/><path d="M7.2 18.2 L4.6 21.2 L8.4 19.6 Z" fill="#f4f4f4"/><path d="M5.4 20.2 L4.6 21.2 L5.8 20.8 Z" fill="#111"/></svg>
<!-- keyboard checker -->
<svg style="left:499px;top:724px;overflow:hidden" width="24" height="24" viewBox="0 0 24 24"><rect x="0" y="0" width="24" height="24" fill="#121216"/><polygon points="-0.2,-9.9 7.3,-7.3 1.8,-1.7 -5.7,-4.3" fill="#b9b9c0"/><polygon points="-0.5,-9.6 5.3,-7.6 1.1,-3.2 -4.7,-5.2" fill="#f1f1f4"/><polygon points="8.5,-6.9 16.0,-4.3 10.5,1.3 3.0,-1.3" fill="#b9b9c0"/><polygon points="8.2,-6.6 14.0,-4.6 9.8,-0.2 4.0,-2.2" fill="#f1f1f4"/><polygon points="17.2,-3.9 24.7,-1.3 19.2,4.3 11.7,1.7" fill="#b9b9c0"/><polygon points="16.9,-3.6 22.7,-1.6 18.5,2.8 12.7,0.8" fill="#f1f1f4"/><polygon points="25.9,-0.9 33.4,1.7 27.9,7.3 20.4,4.7" fill="#b9b9c0"/><polygon points="25.6,-0.6 31.4,1.4 27.2,5.8 21.4,3.8" fill="#f1f1f4"/><polygon points="-6.6,-3.3 0.9,-0.7 -4.6,4.9 -12.1,2.3" fill="#b9b9c0"/><polygon points="-6.9,-3.0 -1.1,-1.0 -5.3,3.4 -11.1,1.4" fill="#f1f1f4"/><polygon points="2.1,-0.3 9.6,2.3 4.1,7.9 -3.4,5.3" fill="#b9b9c0"/><polygon points="1.8,0.0 7.6,2.0 3.4,6.4 -2.4,4.4" fill="#f1f1f4"/><polygon points="10.8,2.7 18.3,5.3 12.8,10.9 5.3,8.3" fill="#b9b9c0"/><polygon points="10.5,3.0 16.3,5.0 12.1,9.4 6.3,7.4" fill="#f1f1f4"/><polygon points="19.5,5.7 27.0,8.3 21.5,13.9 14.0,11.3" fill="#b9b9c0"/><polygon points="19.2,6.0 25.0,8.0 20.8,12.4 15.0,10.4" fill="#f1f1f4"/><polygon points="28.2,8.7 35.7,11.3 30.2,16.9 22.7,14.3" fill="#b9b9c0"/><polygon points="27.9,9.0 33.7,11.0 29.5,15.4 23.7,13.4" fill="#f1f1f4"/><polygon points="-4.3,6.3 3.2,8.9 -2.3,14.5 -9.8,11.9" fill="#b9b9c0"/><polygon points="-4.6,6.6 1.2,8.6 -3.0,13.0 -8.8,11.0" fill="#f1f1f4"/><polygon points="4.4,9.3 11.9,11.9 6.4,17.5 -1.1,14.9" fill="#b9b9c0"/><polygon points="4.1,9.6 9.9,11.6 5.7,16.0 -0.1,14.0" fill="#f1f1f4"/><polygon points="13.1,12.3 20.6,14.9 15.1,20.5 7.6,17.9" fill="#b9b9c0"/><polygon points="12.8,12.6 18.6,14.6 14.4,19.0 8.6,17.0" fill="#f1f1f4"/><polygon points="21.8,15.3 29.3,17.9 23.8,23.5 16.3,20.9" fill="#b9b9c0"/><polygon points="21.5,15.6 27.3,17.6 23.1,22.0 17.3,20.0" fill="#f1f1f4"/><polygon points="-2.0,15.9 5.5,18.5 -0.0,24.1 -7.5,21.5" fill="#b9b9c0"/><polygon points="-2.3,16.2 3.5,18.2 -0.7,22.6 -6.5,20.6" fill="#f1f1f4"/><polygon points="6.7,18.9 14.2,21.5 8.7,27.1 1.2,24.5" fill="#b9b9c0"/><polygon points="6.4,19.2 12.2,21.2 8.0,25.6 2.2,23.6" fill="#f1f1f4"/><polygon points="15.4,21.9 22.9,24.5 17.4,30.1 9.9,27.5" fill="#b9b9c0"/><polygon points="15.1,22.2 20.9,24.2 16.7,28.6 10.9,26.6" fill="#f1f1f4"/><polygon points="24.1,24.9 31.6,27.5 26.1,33.1 18.6,30.5" fill="#b9b9c0"/><polygon points="23.8,25.2 29.6,27.2 25.4,31.6 19.6,29.6" fill="#f1f1f4"/><polygon points="0.3,25.5 7.8,28.1 2.3,33.7 -5.2,31.1" fill="#b9b9c0"/><polygon points="0.0,25.8 5.8,27.8 1.6,32.2 -4.2,30.2" fill="#f1f1f4"/><path d="M10.4 7.4 L12.0 5.4 L13.2 7.2" fill="none" stroke="#1d2bb0" stroke-width="1.3"/><path d="M4.2 13.6 L5.8 11.6 L7.0 13.4" fill="none" stroke="#1d2bb0" stroke-width="1.3"/><path d="M12.7 17.0 L14.3 15.0 L15.5 16.8" fill="none" stroke="#1d2bb0" stroke-width="1.3"/><path d="M19.0 10.0 L20.6 8.0 L21.8 9.8" fill="none" stroke="#1d2bb0" stroke-width="1.3"/><rect x="0.4" y="0.4" width="23.2" height="23.2" fill="none" stroke="#0c0c12" stroke-width="0.9"/></svg>
<!-- powerpoint -->
<svg style="left:543.5px;top:724.5px" width="23" height="23" viewBox="0 0 23 23"><rect x="12" y="2.6" width="10.6" height="17.8" fill="#fbeee8"/><rect x="12" y="2.6" width="10.6" height="17.8" fill="none" stroke="#d24726" stroke-width="1.2"/><path d="M15.4 5.4 V9.4 H19.6" fill="none" stroke="#d24726" stroke-width="2"/><path d="M14.6 13 H20.6 M14.6 16 H20.6" stroke="#d24726" stroke-width="1.6"/><path d="M0 2.6 L13.5 0 V23 L0 20.4 Z" fill="#d24726"/><path d="M4.2 16.4 V7.2 H7.4 Q10.4 7.2 10.4 10 Q10.4 12.8 7.4 12.8 H4.6" fill="none" stroke="#fff" stroke-width="1.8"/></svg>
<!-- word x2 -->
<svg style="left:587.6px;top:725.4px" width="22.5" height="20.2" viewBox="0 0 23 23" preserveAspectRatio="none"><use href="#wordi"/></svg>
<div class="a" style="left:663px;top:716px;width:80px;height:40px;border-radius:4px;background:#444a81;border:1px solid #50568b"></div>
<svg style="left:671.9px;top:725.4px" width="22.4" height="20.2" viewBox="0 0 23 23" preserveAspectRatio="none"><use href="#wordi"/></svg>
<div class="a" style="left:675px;top:752px;width:16px;height:3px;border-radius:1.5px;background:#c8a2dc"></div>
<!-- excel -->
<svg style="left:756px;top:725px" width="22.2" height="21.6" viewBox="0 0 23 23" preserveAspectRatio="none"><rect x="12.6" y="2.6" width="9.6" height="17.8" fill="#fff" stroke="#1e7145" stroke-width="1"/><path d="M14 5.2 H21 M14 8.2 H21 M14 11.2 H21 M14 14.2 H21 M14 17.2 H21 M17.4 3 V20" stroke="#1e7145" stroke-width="1.2"/><path d="M0 2.6 L13.5 0 V23 L0 20.4 Z" fill="#1e7145"/><path d="M3.8 7.4 L9.8 15.8 M9.8 7.4 L3.8 15.8" stroke="#fff" stroke-width="1.9"/></svg>
<!-- yellow signs -->
<svg style="left:800px;top:726px" width="23" height="20" viewBox="0 0 23 20"><path d="M11 0 V20" stroke="#2a1a1a" stroke-width="1.6"/><path d="M4 3.4 L21.6 1.4 L19 7 L1.4 8.6 Z" fill="#e9e274" stroke="#222" stroke-width="0.8"/><path d="M4 12 L21.6 10.4 L19 16 L1.4 17.4 Z" fill="#e9e274" stroke="#222" stroke-width="0.8"/><path d="M6 6 L17 4.6 M6 14.8 L17 13.4" stroke="#333" stroke-width="1.6" stroke-dasharray="2.4 1"/></svg>
<!-- VB -->
<svg style="left:845px;top:727px" width="22" height="18" viewBox="0 0 22 18"><path d="M1 0.6 H19 V14 H1 Z" fill="#dfeaff"/><path d="M1 14 H19 L20.6 16.4 H2 Z" fill="#4e83e6"/><path d="M19 0.6 V14 L20.6 16.4 V3 Z" fill="#6c9af0"/><path d="M1 0.6 H19 V2.6 H1 Z" fill="#f4f8ff"/><text x="4.2" y="10.6" font-family="Liberation Sans" font-weight="bold" font-size="9" fill="#1d55c8">V</text><text x="10.2" y="12.6" font-family="Liberation Sans" font-weight="bold" font-size="8" fill="#1d55c8">B</text></svg>
<!-- DEV C++ -->
<svg style="left:887px;top:724.5px" width="24" height="23" viewBox="0 0 24 23"><rect x="0" y="0" width="23.4" height="23" rx="1.5" fill="#17235f"/><rect x="0.6" y="12" width="22.2" height="10" fill="#1b3c9a"/><text x="1.6" y="10.6" font-family="Liberation Sans" font-weight="bold" font-size="9.6" fill="#fff" textLength="20" lengthAdjust="spacingAndGlyphs">DEV</text><text x="1.6" y="20" font-family="Liberation Sans" font-weight="bold" font-size="9.4" fill="#2c86ee" textLength="20" lengthAdjust="spacingAndGlyphs">C++</text></svg>
<!-- xampp -->
<svg style="left:934px;top:724px" width="24" height="24" viewBox="0 0 24 24"><rect x="0" y="0" width="24" height="24" rx="2.4" fill="#f37623"/><rect x="2.4" y="1.2" width="19" height="1" fill="#f9a368"/><path d="M6 6.4 Q6 4.6 8 4.6 Q9.6 4.6 10.6 6.4 L12 8.4 L13.4 6.4 Q14.4 4.6 16 4.6 Q18 4.6 18 6.4 V9.4 Q18 11.2 16 12 Q18 12.8 18 14.6 V17.6 Q18 19.4 16 19.4 Q14.4 19.4 13.4 17.6 L12 15.6 L10.6 17.6 Q9.6 19.4 8 19.4 Q6 19.4 6 17.6 V14.6 Q6 12.8 8 12 Q6 11.2 6 9.4 Z" fill="none" stroke="#fff" stroke-width="2.3" stroke-linejoin="round"/></svg>
<!-- notepad green -->
<svg style="left:986px;top:724px" width="22" height="24" viewBox="0 0 22 24"><path d="M0.6 0.8 H14.6 L18.6 4.8 V23 H0.6 Z" fill="url(#npg)" stroke="#b8bcc0" stroke-width="1"/><path d="M14.6 0.8 V4.8 H18.6" fill="#e8e8e8" stroke="#b0b0b0" stroke-width="0.7"/><path d="M5.4 7 V15 M4.4 7 H6.4 M8 11.4 H9.6 M10.8 11.4 H12.4" stroke="#333" stroke-width="1.2"/><path d="M20.4 2 L12.6 16.2" stroke="#f0a020" stroke-width="2.4"/><path d="M13.2 15.2 L11.6 18.6 L14.6 16.4" fill="#4a3a2a"/><path d="M20.8 1.2 L19.6 3.4" stroke="#d86a6a" stroke-width="2.4"/></svg>
<!-- dots -->
<div class="a" style="left:1028px;top:734.4px;width:3.4px;height:3.4px;border-radius:50%;background:#fff"></div>
<div class="a" style="left:1034.5px;top:734.4px;width:3.4px;height:3.4px;border-radius:50%;background:#fff"></div>
<div class="a" style="left:1041px;top:734.4px;width:3.4px;height:3.4px;border-radius:50%;background:#fff"></div>
<div class="a" style="left:1060px;top:712px;width:1px;height:47px;background:#5b6193"></div>
<!-- tray -->
<svg style="left:1132px;top:732px" width="12" height="8" viewBox="0 0 12 8"><path d="M0.8 6.8 L6 1.6 L11.2 6.8" fill="none" stroke="#fff" stroke-width="1.5"/></svg>
<svg style="left:1206px;top:727px" width="17" height="18" viewBox="0 0 17 18"><path d="M11.6 1.8 H0.6 V11.8 H11.4" fill="none" stroke="#fff" stroke-width="1.1"/><path d="M6.4 12 V15.8 M3.2 16 H9.8" stroke="#fff" stroke-width="1.1"/><rect x="12.4" y="1" width="3.2" height="6.4" rx="0.8" fill="none" stroke="#fff" stroke-width="1"/><path d="M14 7.4 V16.4 M13 2.8 H15" stroke="#fff" stroke-width="1"/></svg>
<svg style="left:1229px;top:729px" width="19" height="14" viewBox="0 0 19 14"><path d="M1 4.6 H3.6 L7.4 1.2 V12.8 L3.6 9.4 H1 Z" fill="none" stroke="#fff" stroke-width="1.1" stroke-linejoin="round"/><path d="M9.6 4.6 Q11.2 7 9.6 9.4" fill="none" stroke="#fff" stroke-width="1.1"/><path d="M12 2.8 Q14.8 7 12 11.2" fill="none" stroke="#9fa4c4" stroke-width="1.1"/><path d="M14.6 1 Q18.6 7 14.6 13" fill="none" stroke="#7177a4" stroke-width="1.1"/></svg>
<svg style="left:1333px;top:729px" width="15" height="15" viewBox="0 0 15 15"><path d="M2.6 10.6 V6.4 Q2.6 1 7.2 1 Q11.8 1 11.8 6.4 V10.6 L13.4 11.8 H1 Z" fill="none" stroke="#fff" stroke-width="1.2" stroke-linejoin="round"/><path d="M5.6 12.2 Q7.2 14.6 8.8 12.2" fill="none" stroke="#fff" stroke-width="1.2"/></svg>

<span class="t" id="t0" style="left:370.4px;top:0.2px;font-size:11.3px;color:#a9a9a9;letter-spacing:0.392px;">Documento3&nbsp; -&nbsp; Word</span>
<span class="t" id="t1" style="left:726.3px;top:0.2px;font-size:11.3px;color:#b6b6b6;letter-spacing:-0.022px;">Herramientas de SmartArt</span>
<span class="t" id="t2" style="left:1119.2px;top:0.2px;font-size:11.3px;color:#6e6e6e;letter-spacing:-0.108px;">Inic. ses.</span>
<span class="t" id="t3" style="left:11.0px;top:33.0px;font-size:12.3px;color:#ffffff;letter-spacing:-0.017px;">Archivo</span>
<span class="t" id="t4" style="left:74.9px;top:33.0px;font-size:12.3px;color:#ffffff;letter-spacing:0.030px;">Inicio</span>
<span class="t" id="t5" style="left:131.2px;top:33.0px;font-size:12.3px;color:#ffffff;letter-spacing:-0.388px;">Insertar</span>
<span class="t" id="t6" style="left:197.4px;top:33.0px;font-size:12.3px;color:#ffffff;letter-spacing:-0.497px;">Diseño</span>
<span class="t" id="t7" style="left:260.3px;top:33.0px;font-size:12.3px;color:#ffffff;letter-spacing:-0.236px;">Disposición</span>
<span class="t" id="t8" style="left:348.4px;top:33.0px;font-size:12.3px;color:#ffffff;letter-spacing:-0.548px;">Referencias</span>
<span class="t" id="t9" style="left:435.3px;top:33.0px;font-size:12.3px;color:#ffffff;letter-spacing:-0.277px;">Correspondencia</span>
<span class="t" id="t10" style="left:552.4px;top:33.0px;font-size:12.3px;color:#ffffff;letter-spacing:-0.684px;">Revisar</span>
<span class="t" id="t11" style="left:615.9px;top:33.0px;font-size:12.3px;color:#ffffff;letter-spacing:-0.425px;">Vista</span>
<span class="t" id="t12" style="left:668.0px;top:33.0px;font-size:12.3px;color:#ffffff;letter-spacing:-0.071px;">Ayuda</span>
<span class="t" id="t13" style="left:804.3px;top:33.0px;font-size:12.3px;color:#ffffff;letter-spacing:-0.114px;">Formato</span>
<span class="t" id="t14" style="left:736.3px;top:33.0px;font-size:12.3px;color:#262626;letter-spacing:-0.430px;">Diseño</span>
<span class="t" id="t15" style="left:894.3px;top:33.0px;font-size:12.3px;color:#5c5c5c;letter-spacing:-0.724px;">¿Qué desea hacer?</span>
<span class="t" id="t16" style="left:1290.5px;top:33.0px;font-size:12.3px;color:#ffffff;letter-spacing:-0.087px;">Compartir</span>
<span class="t" id="t17" style="left:28.3px;top:63.0px;font-size:11.3px;color:#262626;letter-spacing:0.306px;">Agregar forma</span>
<span class="t" id="t18" style="left:28.3px;top:86.0px;font-size:11.3px;color:#828282;letter-spacing:0.194px;">Agregar viñeta</span>
<span class="t" id="t19" style="left:28.3px;top:108.6px;font-size:11.3px;color:#262626;letter-spacing:0.098px;">Panel de texto</span>
<span class="t" id="t20" style="left:147.2px;top:63.0px;font-size:11.3px;color:#262626;letter-spacing:0.341px;">Promover</span>
<span class="t" id="t21" style="left:147.2px;top:86.0px;font-size:11.3px;color:#828282;letter-spacing:0.356px;">Disminuir nivel</span>
<span class="t" id="t22" style="left:147.2px;top:109.0px;font-size:11.3px;color:#262626;letter-spacing:0.086px;">De derecha a izquierda</span>
<span class="t" id="t23" style="left:295.3px;top:63.0px;font-size:11.3px;color:#828282;letter-spacing:-0.015px;">Subir</span>
<span class="t" id="t24" style="left:295.3px;top:86.0px;font-size:11.3px;color:#828282;letter-spacing:-0.195px;">Bajar</span>
<span class="t" id="t25" style="left:295.3px;top:109.0px;font-size:11.3px;color:#262626;letter-spacing:-0.012px;">Diseño</span>
<span class="t" id="t26" style="left:143.7px;top:132.2px;font-size:11px;color:#262626;letter-spacing:0.071px;">Crear gráfico</span>
<span class="t" id="t27" style="left:525.6px;top:132.2px;font-size:11px;color:#262626;letter-spacing:0.036px;">Diseños</span>
<span class="t" id="t28" style="left:748.3px;top:97.0px;font-size:11.3px;color:#262626;letter-spacing:0.285px;">Cambiar</span>
<span class="t" id="t29" style="left:747.4px;top:113.3px;font-size:11.3px;color:#262626;letter-spacing:0.140px;">colores</span>
<span class="t" id="t30" style="left:957.5px;top:132.2px;font-size:11px;color:#262626;letter-spacing:-0.004px;">Estilos SmartArt</span>
<span class="t" id="t31" style="left:1260.7px;top:96.6px;font-size:11.3px;color:#262626;letter-spacing:-0.107px;">Restablecer</span>
<span class="t" id="t32" style="left:1272.7px;top:113.0px;font-size:11.3px;color:#262626;letter-spacing:0.268px;">gráfico</span>
<span class="t" id="t33" style="left:1261.6px;top:132.0px;font-size:11px;color:#262626;letter-spacing:-0.046px;">Restablecer</span>
<span class="t" id="t34" style="left:276.5px;top:201.7px;font-size:11.3px;color:#1f4e8d;letter-spacing:0.190px;font-weight:bold;-webkit-text-stroke:0;">Escribir aquí el texto</span>
<span class="t" id="t35" style="left:323.4px;top:228.9px;font-size:12.5px;color:#1a1a1a;letter-spacing:-0.372px;">centro GNet</span>
<span class="t" id="t36" style="left:349.5px;top:253.0px;font-size:12.5px;color:#1a1a1a;letter-spacing:-0.149px;">Administracion</span>
<span class="t" id="t37" style="left:349.5px;top:276.8px;font-size:12.5px;color:#1a1a1a;letter-spacing:-0.488px;">Maestros</span>
<span class="t" id="t38" style="left:349.5px;top:300.6px;font-size:12.5px;color:#1a1a1a;letter-spacing:-0.663px;">Maestras</span>
<span class="t" id="t39" style="left:376.4px;top:324.7px;font-size:12.5px;color:#1a1a1a;letter-spacing:-0.177px;">Alumnos</span>
<span class="t" id="t40" style="left:287.3px;top:350.3px;font-size:11px;color:#464646;letter-spacing:-0.096px;font-weight:bold;-webkit-text-stroke:0;">Organigrama...</span>
<span class="t" id="t41" style="left:640.5px;top:208.9px;font-size:8.4px;color:#ffffff;letter-spacing:0.395px;-webkit-text-stroke:0.3px #fff;">centro GNet</span>
<span class="t" id="t42" style="left:596.5px;top:254.0px;font-size:8.4px;color:#ffffff;letter-spacing:0.376px;-webkit-text-stroke:0.3px #fff;">Administracion</span>
<span class="t" id="t43" style="left:607.8px;top:299.1px;font-size:8.4px;color:#ffffff;letter-spacing:0.368px;-webkit-text-stroke:0.3px #fff;">Maestros</span>
<span class="t" id="t44" style="left:685.4px;top:299.1px;font-size:8.4px;color:#ffffff;letter-spacing:0.393px;-webkit-text-stroke:0.3px #fff;">Maestras</span>
<span class="t" id="t45" style="left:702.0px;top:343.9px;font-size:8.4px;color:#ffffff;letter-spacing:0.358px;-webkit-text-stroke:0.3px #fff;z-index:30;">Alumnos</span>
<span class="t" id="t46" style="left:9.6px;top:693.2px;font-size:11.3px;color:#ffffff;letter-spacing:-0.187px;">Página 1 de 1</span>
<span class="t" id="t47" style="left:98.3px;top:692.8px;font-size:11.3px;color:#ffffff;letter-spacing:-0.057px;">0 palabras</span>
<span class="t" id="t48" style="left:201.6px;top:693.2px;font-size:11.3px;color:#ffffff;letter-spacing:-0.139px;">Español (Guatemala)</span>
<span class="t" id="t49" style="left:1336.5px;top:692.8px;font-size:11.3px;color:#ffffff;letter-spacing:-0.688px;">50 %</span>
<span class="t" id="t50" style="left:99.2px;top:729.0px;font-size:11px;color:#ffffff;letter-spacing:0.187px;z-index:5;">Sisten</span>
<span class="t" id="t51" style="left:182.8px;top:729.0px;font-size:11px;color:#ffffff;letter-spacing:0.095px;z-index:5;">Quiere</span>
<span class="t" id="t52" style="left:619.6px;top:729.0px;font-size:11px;color:#ffffff;letter-spacing:0.391px;">Docur</span>
<span class="t" id="t53" style="left:703.7px;top:729.0px;font-size:11px;color:#ffffff;letter-spacing:0.371px;">Docur</span>
<span class="t" id="t54" style="left:1166.7px;top:729.0px;font-size:11px;color:#ffffff;letter-spacing:0.000px;transform:scaleX(.84);transform-origin:0 50%;">ESP</span>
<span class="t" id="t55" style="left:1269.2px;top:720.3px;font-size:10.6px;color:#ffffff;letter-spacing:0.264px;">09:30 a. m.</span>
<span class="t" id="t56" style="left:1263.3px;top:735.9px;font-size:10.6px;color:#ffffff;letter-spacing:0.877px;">24/04/2026</span>
<div class="red" style="left:0;top:0;width:1369px;height:2px"></div>
<div class="red" style="left:0;top:0;width:2px;height:761px"></div>
<div class="red" style="left:1366.5px;top:0;width:2.5px;height:761px"></div>
<div class="red" style="left:0;top:758.4px;width:1369px;height:2.6px"></div>
</body></html>
